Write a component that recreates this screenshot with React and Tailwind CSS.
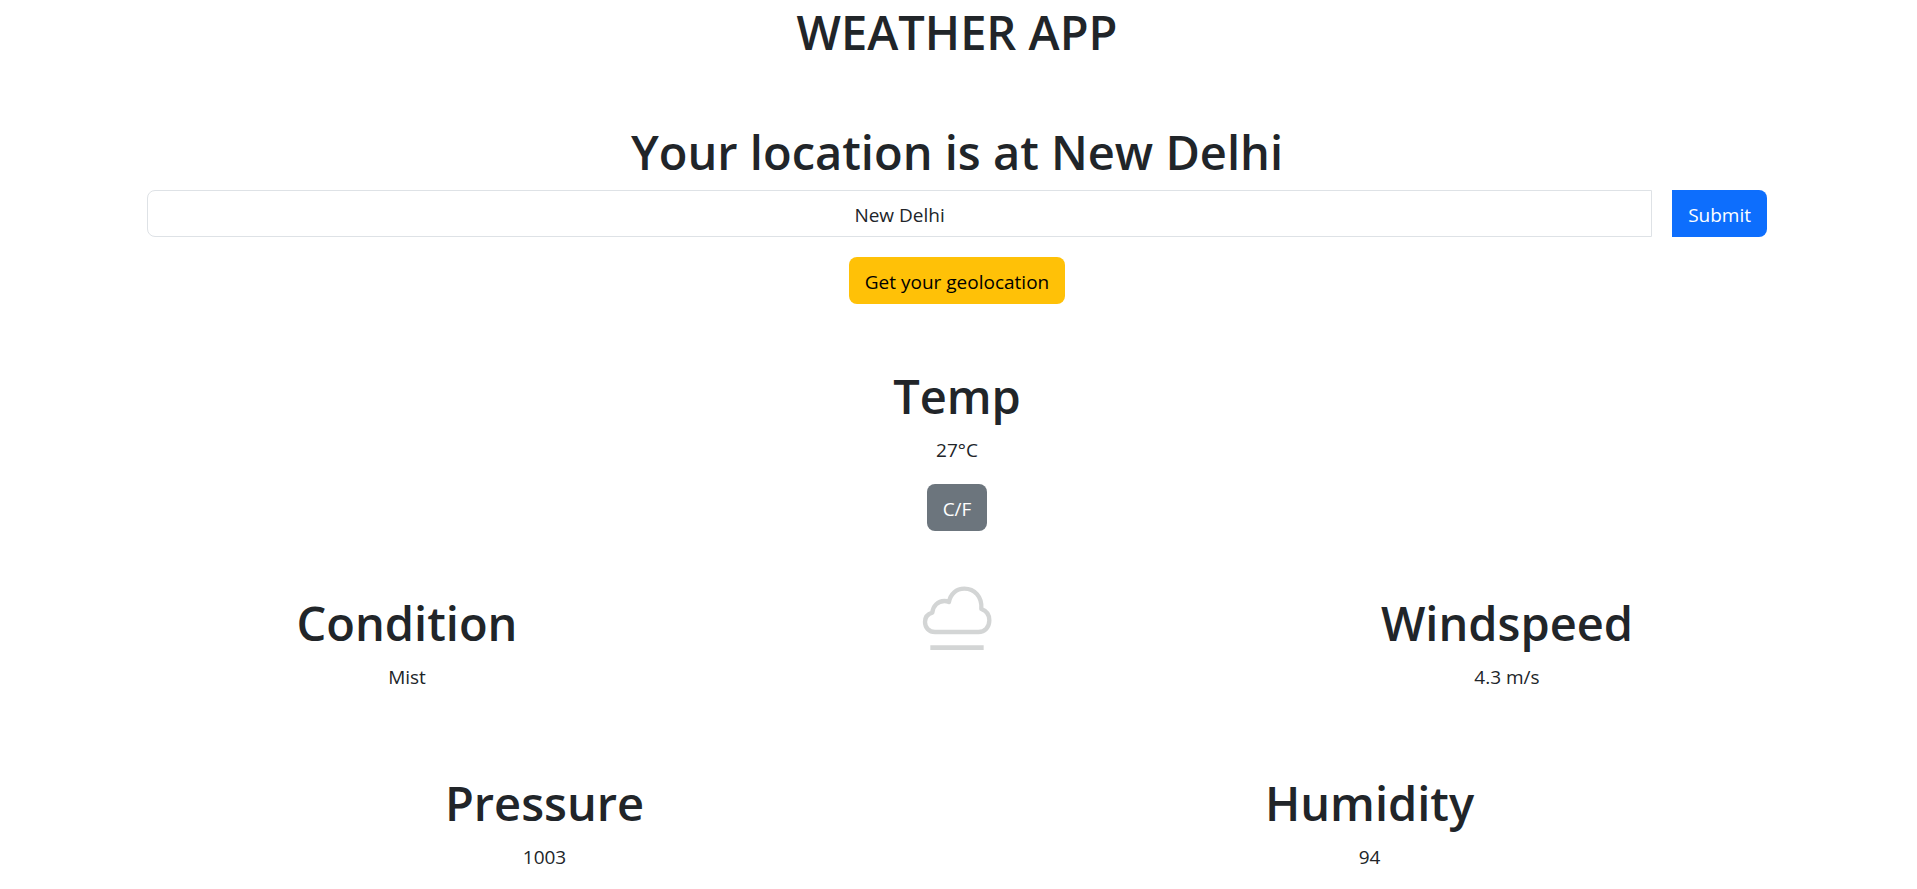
import { useState } from "react";

function Stat({ title, children }) {
  return (
    <section className="flex-1">
      <h2 className="mb-2 pt-0.5 text-[47px] leading-[60px] font-semibold">{title}</h2>
      <p className="leading-8">{children}</p>
    </section>
  );
}

function MistIcon() {
  return (
    <svg
      role="img"
      aria-label="Mist"
      viewBox="0 0 216 204"
      className="h-[68px] w-[72px]"
      fill="none"
      stroke="#d3d5d5"
      strokeWidth="13"
      strokeLinejoin="round"
    >
      <path d="M42 141 C24 141 12 128 12 111 C12 98 20 87 34 83 C36 62 51 48 70 48 C75 48 80 49 84 51 C88 27 106 11 130 11 C160 11 184 34 181 72 C196 77 205 90 205 106 C205 126 192 141 172 141 Z" />
      <path d="M28 188 H188" strokeWidth="14" />
    </svg>
  );
}

export default function App() {
  const [city, setCity] = useState("New Delhi");
  const [celsius, setCelsius] = useState(true);

  return (
    <main className="pr-[150px] pl-[147px] text-center font-['Open_Sans',sans-serif] text-[19px] text-[#212529]">
      <h1 className="mb-[58px] pt-0.5 text-[47px] leading-[60px] font-semibold">WEATHER APP</h1>
      <h2 className="mb-2 pt-0.5 text-[47px] leading-[60px] font-semibold">
        Your location is at New Delhi
      </h2>

      <form className="flex gap-5" onSubmit={(e) => e.preventDefault()}>
        <input
          aria-label="City"
          value={city}
          onChange={(e) => setCity(e.target.value)}
          className="h-[47px] min-w-0 flex-1 rounded-l-lg border border-[#dee2e6] bg-white px-4 pt-0.5 text-center"
        />
        <button type="submit" className="h-[47px] rounded-r-lg bg-[#0d6efd] px-4 pt-1 text-white">
          Submit
        </button>
      </form>

      <button type="button" className="mt-5 h-[47px] rounded-lg bg-[#ffc107] px-4 pt-1 text-black">
        Get your geolocation
      </button>

      <div className="mt-[60px] flex">
        <Stat title="Temp">{celsius ? "27°C" : "81°F"}</Stat>
      </div>
      <button
        type="button"
        onClick={() => setCelsius(!celsius)}
        className="mt-[18px] h-[47px] rounded-lg bg-[#6c757d] px-4 pt-1 text-white"
      >
        C/F
      </button>

      <div className="-mx-[15px] mt-[60px] flex">
        <Stat title="Condition">Mist</Stat>
        <div className="-mt-1.5 flex flex-1 justify-center">
          <MistIcon />
        </div>
        <Stat title="Windspeed">4.3 m/s</Stat>
      </div>

      <div className="-mx-[15px] mt-[78px] flex">
        <Stat title="Pressure">1003</Stat>
        <Stat title="Humidity">94</Stat>
      </div>
    </main>
  );
}
